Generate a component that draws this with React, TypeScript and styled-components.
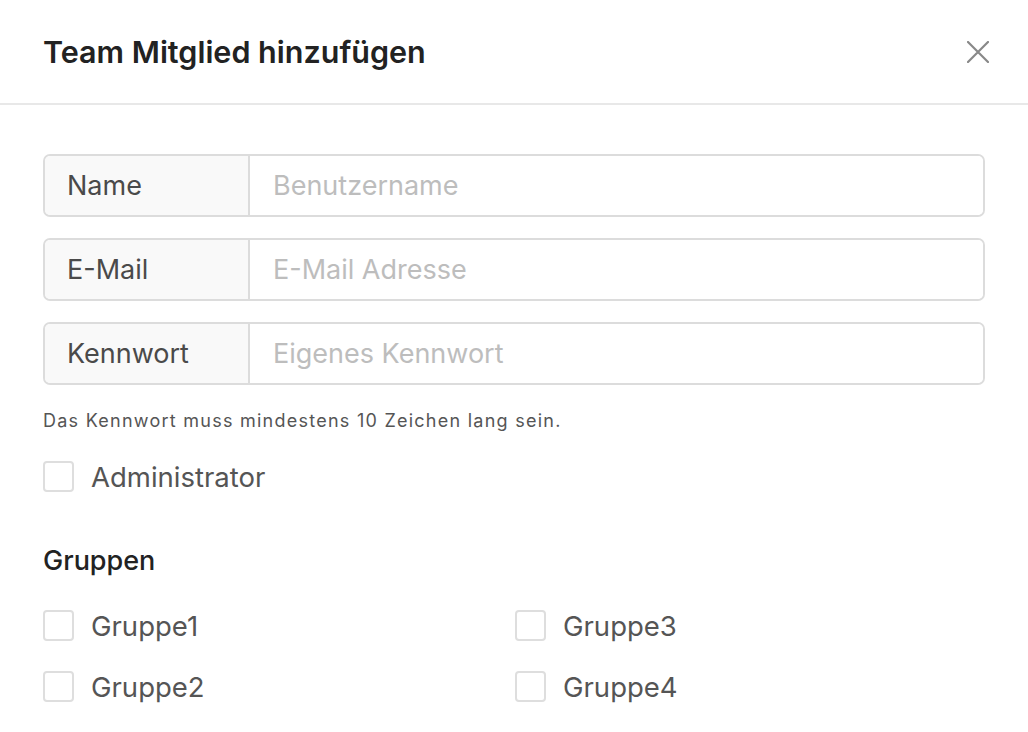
import styled, { createGlobalStyle } from 'styled-components';

const GlobalStyle = createGlobalStyle`
  html, body {
    margin: 0;
    padding: 0;
    background: #fff;
  }
  body {
    font-family: Inter, "Noto Sans", "Liberation Sans", sans-serif;
    color: #222;
  }
  * { box-sizing: border-box; }
`;

const Modal = styled.div`
  width: 1028px;
  height: 732px;
  background: #fff;
  overflow: hidden;
`;

const Header = styled.header`
  height: 105px;
  display: flex;
  align-items: center;
  justify-content: space-between;
  padding: 0 39px 0 43px;
  border-bottom: 2px solid #e8e8e8;
`;

const Title = styled.h1`
  margin: 0;
  font-size: 30.5px;
  font-weight: 600;
  color: #222;
`;

const CloseButton = styled.button`
  width: 22px;
  height: 22px;
  padding: 0;
  border: none;
  background: none;
  display: flex;
  align-items: center;
  justify-content: center;
  cursor: pointer;
`;

const Body = styled.div`
  padding: 49px 43px 0 43px;
  display: flex;
  flex-direction: column;
`;

const Fields = styled.div`
  display: flex;
  flex-direction: column;
  gap: 21px;
`;

const InputGroup = styled.div`
  display: flex;
  height: 63px;
  border: 2px solid #dcdcdc;
  border-radius: 7px;
  overflow: hidden;
`;

const Addon = styled.div`
  width: 205px;
  flex: none;
  display: flex;
  align-items: center;
  padding-left: 22px;
  background: #f9f9f9;
  border-right: 2px solid #dcdcdc;
  font-size: 27px;
  color: #4a4a4a;
`;

const Input = styled.input`
  flex: 1;
  border: none;
  outline: none;
  padding: 0 0 0 23px;
  font-family: inherit;
  font-size: 27px;
  color: #333;
  background: #fff;

  &::placeholder {
    color: #bdbdbd;
  }
`;

const Help = styled.p`
  margin: 25px 0 0;
  font-size: 18px;
  color: #555;
  letter-spacing: 1.25px;
`;

const CheckRow = styled.label`
  display: flex;
  align-items: center;
  gap: 17px;
  height: 31px;
  font-size: 27.5px;
  color: #555;
  cursor: pointer;
`;

const Box = styled.span`
  width: 31px;
  height: 31px;
  flex: none;
  border: 2px solid #dedede;
  border-radius: 4px;
  background: #fff;
`;

const AdminRow = styled.div`
  margin-top: 30px;
`;

const SectionTitle = styled.h2`
  margin: 52px 0 0;
  font-size: 27px;
  font-weight: 500;
  color: #222;
`;

const GroupGrid = styled.div`
  margin-top: 33px;
  display: grid;
  grid-template-columns: 472px 1fr;
  row-gap: 30px;
  grid-auto-flow: column;
  grid-template-rows: repeat(2, 31px);
`;

const CloseIcon = () => (
  <svg width="22" height="22" viewBox="0 0 22 22">
    <path d="M1 1 L21 21 M21 1 L1 21" stroke="#888" strokeWidth="2.2" strokeLinecap="round" />
  </svg>
);

const Check = ({ label }: { label: string }) => (
  <CheckRow>
    <Box />
    {label}
  </CheckRow>
);

const fields = [
  { label: 'Name', placeholder: 'Benutzername' },
  { label: 'E-Mail', placeholder: 'E-Mail Adresse' },
  { label: 'Kennwort', placeholder: 'Eigenes Kennwort' },
];

const groups = ['Gruppe1', 'Gruppe2', 'Gruppe3', 'Gruppe4'];

export default function App() {
  return (
    <>
      <GlobalStyle />
      <Modal>
        <Header>
          <Title>Team Mitglied hinzufügen</Title>
          <CloseButton aria-label="Schließen">
            <CloseIcon />
          </CloseButton>
        </Header>
        <Body>
          <Fields>
            {fields.map((f) => (
              <InputGroup key={f.label}>
                <Addon>{f.label}</Addon>
                <Input placeholder={f.placeholder} />
              </InputGroup>
            ))}
          </Fields>
          <Help>Das Kennwort muss mindestens 10 Zeichen lang sein.</Help>
          <AdminRow>
            <Check label="Administrator" />
          </AdminRow>
          <SectionTitle>Gruppen</SectionTitle>
          <GroupGrid>
            {groups.map((g) => (
              <Check key={g} label={g} />
            ))}
          </GroupGrid>
        </Body>
      </Modal>
    </>
  );
}
